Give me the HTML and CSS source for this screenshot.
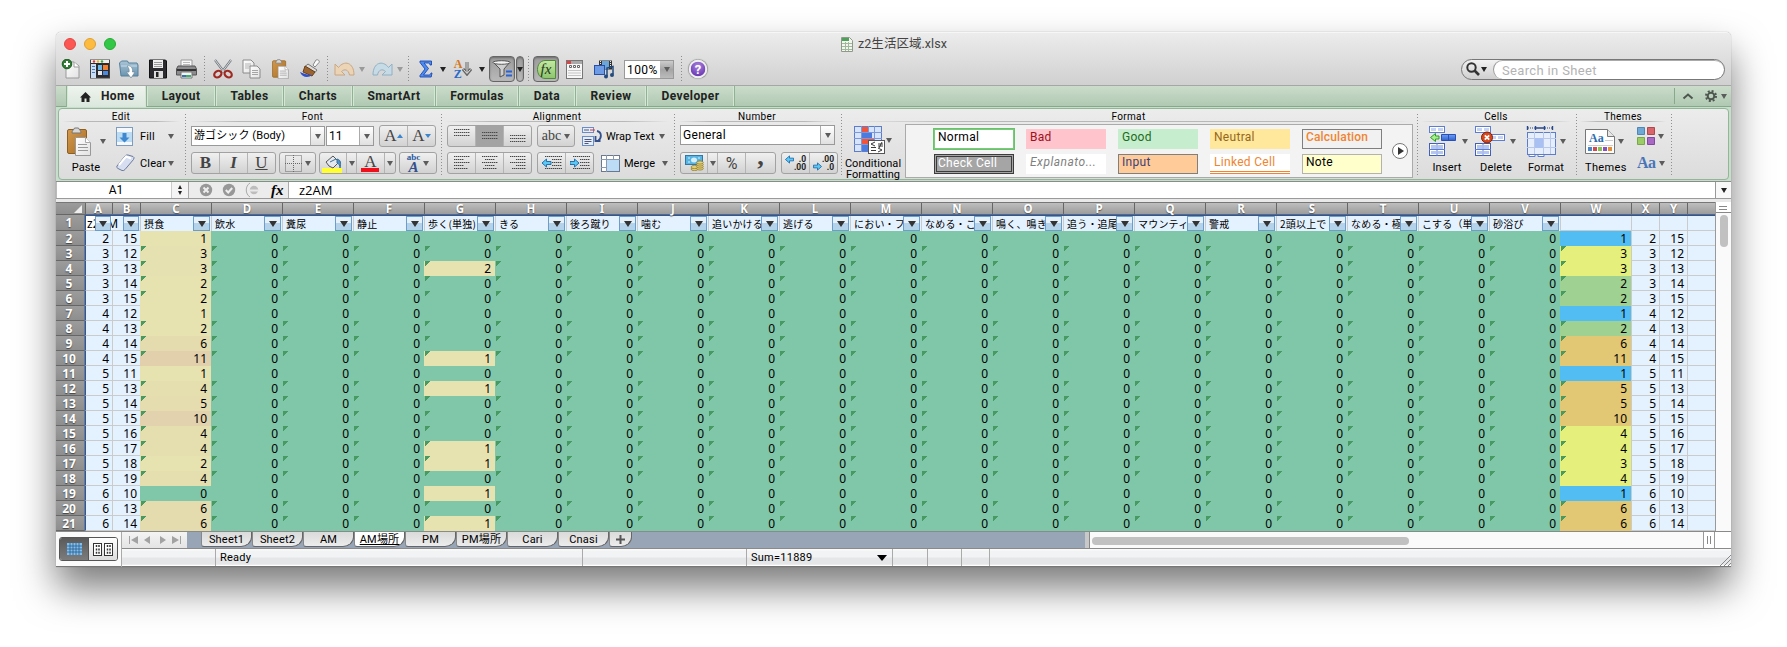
FILE: index.html
```html
<!DOCTYPE html>
<html lang="ja">
<head>
<meta charset="utf-8">
<title>z2生活区域.xlsx</title>
<link rel="stylesheet" href="styles.css">
</head>
<body>
<svg class="defs" width="0" height="0">
  <defs>
    <linearGradient id="gFolder" x1="0" y1="0" x2="0" y2="1"><stop offset="0" stop-color="#a9c4d6"/><stop offset="1" stop-color="#6b94b0"/></linearGradient>
    <linearGradient id="gWood" x1="0" y1="0" x2="1" y2="1"><stop offset="0" stop-color="#d49a4e"/><stop offset="1" stop-color="#a86d22"/></linearGradient>
    <linearGradient id="gBlue" x1="0" y1="0" x2="0" y2="1"><stop offset="0" stop-color="#6fa0f0"/><stop offset="1" stop-color="#2f62d0"/></linearGradient>
    <linearGradient id="gPage" x1="0" y1="0" x2="1" y2="1"><stop offset="0" stop-color="#fff"/><stop offset="1" stop-color="#e2e2e2"/></linearGradient>
    <linearGradient id="gGreen" x1="0" y1="0" x2="0" y2="1"><stop offset="0" stop-color="#c6e8a4"/><stop offset="1" stop-color="#8cc46a"/></linearGradient>
    <g id="pages">
      <path d="M1 1h8l3 3v10H1z" fill="url(#gPage)" stroke="#8a8a8a"/>
      <path d="M3 5h6M3 7h6M3 9h4" stroke="#b5b5b5"/>
      <path d="M8 7h7l3 3v9H8z" fill="url(#gPage)" stroke="#8a8a8a"/>
      <path d="M10 11.500h6M10 13.500h6M10 15.500h6" stroke="#a5a5a5"/>
    </g>
    <g id="clip">
      <rect x=".5" y="2.500" width="19" height="24" rx="1.500" fill="url(#gWood)" stroke="#8f5f1e"/>
      <path d="M5 6c0-3 2-3 2.500-5h4c.5 2 2.500 2 2.500 5z" fill="#d8d8d8" stroke="#777"/>
      <path d="M8.500 10.500h10l5 5v13h-15z" fill="url(#gPage)" stroke="#999"/>
      <path d="M18.500 10.500v5h5" fill="#fff" stroke="#aaa"/>
      <path d="M11 17.500h9M11 20.500h10M11 23.500h10" stroke="#999"/>
    </g>
    <g id="cell2"><rect x=".5" y=".5" width="15" height="6" fill="#fff" stroke="#5e7dd0"/><path d="M2 2h5v3H2zM9 2h5v3H9z" fill="#c5d3f6"/></g>
    <g id="cell4"><rect x=".5" y=".5" width="15" height="12" fill="#fff" stroke="#4560b0"/><path d="M2 2h5v4H2zM9 2h5v4H9zM2 8h5v3H2zM9 8h5v3H9z" fill="#b4c6f2"/><path d="M0 6.500h16M8 0v13" stroke="#5e7dd0"/></g>
    <g id="lines"><path d="M0 .5h16M0 3.500h16M0 6.500h16" stroke="#4a4a4a" stroke-dasharray="1.400 .6"/></g>
    <path id="arrL" d="M0 4l4.500-4v2.500H9v3H4.500V8z" fill="#5cc8f4" stroke="#1466a8" stroke-width=".9"/>
  </defs>
</svg>

<div class="window">
  <header class="top">
    <div class="titlebar">
      <div class="lights"><i class="red"></i><i class="amber"></i><i class="green"></i></div>
      <div class="title">
        <svg width="12" height="15" viewBox="0 0 12 15"><path d="M.5.500h8l3 3v11H.5z" fill="#f4f4f0" stroke="#8d9a88"/><path d="M1 1h7v3H1z" fill="#4fa05a"/><path d="M1 6.500h10M1 9.500h10M1 12.500h10M4.500 5v9M7.500 5v9" stroke="#9fba9a"/></svg>
        <span>z2生活区域.xlsx</span>
      </div>
    </div>
    <div class="toolbar">
      <span class="tool"><svg width="20" height="20" viewBox="0 0 20 20"><path d="M5 3h8l5 4v12H5z" fill="url(#gPage)" stroke="#999"/><path d="M13 3v5h5" fill="#fff" stroke="#999"/><circle cx="6" cy="5" r="4.800" fill="#2f7d32" stroke="#1c5a20"/><path d="M6 2v6M3 5h6" stroke="#fff" stroke-width="2"/></svg></span>
      <span class="tool"><svg width="20" height="20" viewBox="0 0 20 20"><rect x=".5" y="1" width="19" height="18" fill="#2c2c30" stroke="#444"/><path d="M1 1h18v3H1z" fill="#eee"/><circle cx="4" cy="2.500" r="1.200" fill="#d33"/><circle cx="8" cy="2.500" r="1.200" fill="#e8b020"/><circle cx="12" cy="2.500" r="1.200" fill="#3a3"/><path d="M1 5h5v14H1z" fill="#c9ddf3"/><path d="M2 7.500h3M2 10.500h3M2 13.500h3" stroke="#4a78c0"/><path d="M8 6h4v5H8z" fill="#6ab7ee"/><path d="M13 6h5v5h-5z" fill="#f08030"/><path d="M8 12h4v4H8z" fill="#e8e8e8"/><path d="M13 12h5v4h-5z" fill="#4a8be0"/></svg></span>
      <span class="tool"><svg width="20" height="20" viewBox="0 0 20 20"><path d="M.5 4l2-2h6l1 2h8.500l1 2v11H2z" fill="url(#gFolder)" stroke="#55809c"/><path d="M2 7h16" stroke="#c8dbe7"/><path d="M8 7c4-1 6 2 5.500 6H16l-4 6-4.500-6h2.500c.5-2 0-4-2-6z" fill="#fff" stroke="#6d8798" stroke-width=".7"/></svg></span>
      <span class="tool"><svg width="20" height="20" viewBox="0 0 20 20"><path d="M1.500 1h16l1 1v17h-17z" fill="#2b2b30" stroke="#111"/><path d="M5 1h10v8H5z" fill="#f0f0f0"/><path d="M6 3.500h8M6 5.500h8M6 7.500h8" stroke="#999"/><path d="M6 12h9v7H6z" fill="#ddd"/><path d="M8 13h2.500v5H8z" fill="#222"/></svg></span>
      <span class="tool"><svg width="21" height="20" viewBox="0 0 21 20"><path d="M5 1h11v8H5z" fill="#fafafa" stroke="#999"/><path d="M7 3.500h7M7 5.500h7" stroke="#bbb"/><path d="M2 7h17l1.500 3v6H.5v-6z" fill="#8d8d90" stroke="#555"/><path d="M1 10h19v2H1z" fill="#333"/><path d="M5 13h11v6H5z" fill="#f4f4f4" stroke="#777"/><path d="M6 16h4v2H6z" fill="#37a"/><path d="M10 16h5v2h-5z" fill="#3bb070"/></svg></span>
      <i class="sep s7"></i>
      <span class="tool"><svg width="20" height="20" viewBox="0 0 20 20"><path d="M2 1l9 12M18 1L9 13" stroke="#6e767c" stroke-width="2.200"/><path d="M2 1l9 12M18 1L9 13" stroke="#e2e6e8" stroke-width=".9"/><ellipse cx="4.800" cy="15" rx="3.800" ry="3" fill="none" stroke="#a02a22" stroke-width="2.200" transform="rotate(-35 5 15)"/><ellipse cx="15.200" cy="15" rx="3.800" ry="3" fill="none" stroke="#a02a22" stroke-width="2.200" transform="rotate(35 15 15)"/></svg></span>
      <span class="tool"><svg width="20" height="20" viewBox="0 0 20 20"><use href="#pages"/></svg></span>
      <span class="tool"><svg width="19" height="20" viewBox="-1 0 26 29"><use href="#clip"/></svg></span>
      <span class="tool"><svg width="20" height="20" viewBox="0 0 20 20"><path d="M13 6l3-5c2-1 4 1 3 2.500L15 8z" fill="#fafafa" stroke="#888"/><path d="M8 5l9 6-2 2.500-10-6z" fill="#ddd" stroke="#777"/><path d="M5 7l10 6-3 4-9-4z" fill="#9c6430" stroke="#6a4018"/><path d="M0 13c3 1 7 3 12 3-3 3-10 3-12-3z" fill="#2f4fc8"/></svg></span>
      <i class="sep s7"></i>
      <span class="tool t26 dim"><svg width="21" height="18" viewBox="0 0 21 18"><path d="M1 4v11h10l-3.500-3.500c3-3 7-2 8 3.500h4.500C20 2 10 0 4.500 7.500z" fill="#f1d3ae" stroke="#c69c6c"/></svg></span>
      <span class="tool t10"><i class="arr gray"></i></span>
      <span class="tool t30 dim"><svg width="21" height="18" viewBox="0 0 21 18"><path d="M20 4v11H10l3.500-3.500c-3-3-7-2-8 3.500H1C1 2 11 0 16.500 7.500z" fill="#c3dcea" stroke="#80a8c0"/></svg></span>
      <span class="tool t6"><i class="arr gray"></i></span>
      <i class="sep s11"></i>
      <span class="tool t24"><svg width="14" height="18" viewBox="0 0 14 18"><path d="M1 1h11.500v4h-1.500c0-1.500-1-2-2-2H5l4.500 5.500L4.500 15H9.500c1.500 0 2-.5 2.500-2h1l-.8 4H1v-1.500L6 9 1 2.500z" fill="#4c8bf0" stroke="#1c49b0" stroke-width=".9"/></svg></span>
      <span class="tool t10"><i class="arr dark"></i></span>
      <span class="tool t30 sortaz"><span><b class="la">A</b><b class="lz">Z</b></span><svg width="10" height="14" viewBox="0 0 10 14"><path d="M5 0v11M1 7l4 5 4-5" fill="none" stroke="#666" stroke-width="3"/><path d="M5 0v11M1.500 7.500l3.500 4 3.500-4" fill="none" stroke="#e5e5e5" stroke-width="1"/></svg></span>
      <span class="tool t8"><i class="arr dark"></i></span>
      <span class="pressed filter"><svg width="20" height="18" viewBox="0 0 20 18"><path d="M1 2h17l-6 7v6l-4 2V9z" fill="#cfcfcf" stroke="#555"/><ellipse cx="9.500" cy="2.500" rx="8.500" ry="1.800" fill="#f2f2f2" stroke="#555"/><path d="M14 11.500h6M14 15.500h6" stroke="#2a62d8" stroke-width="2"/></svg></span>
      <span class="pressed narrow"><i class="arr dark"></i></span>
      <i class="sep s9"></i>
      <span class="pressed fxb"><svg width="19" height="19" viewBox="0 0 19 19"><path d="M8 .5h10.500v18H8C-2 18-2 1 8 .5z" fill="url(#gGreen)" stroke="#4f8a3c"/></svg><em>fx</em></span>
      <span class="tool t31"><svg width="17" height="19" viewBox="0 0 17 19"><rect x=".5" y=".5" width="16" height="18" fill="#f7f7f7" stroke="#777"/><path d="M1 1h15v3H1z" fill="#aaa"/><path d="M1 1h4v3H1z" fill="#d44"/><path d="M3.500 5.500h2v2h-2zM7.500 5.500h2v2h-2zM11.500 5.500h2v2h-2z" fill="#fff" stroke="#666"/><path d="M2 10.500h13M2 13h13M2 15.500h13" stroke="#c5c5c5"/></svg></span>
      <span class="tool t28"><svg width="20" height="19" viewBox="0 0 20 19"><rect x="5" y=".5" width="13" height="9" fill="#333"/><path d="M8 1h7v8H8z" fill="#6aa6d8"/><path d="M6.500 1v8M16.500 1v8" stroke="#eee" stroke-dasharray="1 1"/><rect x=".5" y="5.500" width="10" height="9" fill="#6d9be6" stroke="#2850a8"/><path d="M13 16V8l6-1.500V14" fill="none" stroke="#234a7c" stroke-width="1.500"/><circle cx="12" cy="16.500" r="2" fill="#234a7c"/><circle cx="18" cy="15" r="2" fill="#234a7c"/></svg></span>
      <span class="zoom"><span>100%</span><i><i class="arr"></i></i></span>
      <i class="sep s14"></i>
      <span class="help">?</span>
      <div class="search"><span class="lens"><svg width="14" height="14" viewBox="0 0 14 14"><circle cx="5.500" cy="5.500" r="4.200" fill="none" stroke="#333" stroke-width="2"/><path d="M8.500 8.500l4.500 4.500" stroke="#333" stroke-width="2.600"/></svg><i class="arr dark"></i></span><span class="field">Search in Sheet</span></div>
    </div>
  </header>

  <nav class="tabs">
    <span class="tab home"><svg width="11" height="10" viewBox="0 0 11 10"><path d="M5.500 0L11 5.500H9.500V10H6.500V6.500h-2V10h-3V5.500H0z" fill="#222"/></svg>Home</span>
    <span class="tab w69">Layout</span><span class="tab w68">Tables</span><span class="tab w69">Charts</span><span class="tab w83">SmartArt</span><span class="tab w83">Formulas</span><span class="tab w57">Data</span><span class="tab w71">Review</span><span class="tab w88">Developer</span>
    <span class="tabtools"><svg width="12" height="8" viewBox="0 0 12 8"><path d="M1.500 6.500L6 2.500l4.500 4" fill="none" stroke="#4d574e" stroke-width="2"/></svg><svg class="gear" width="12" height="12" viewBox="0 0 12 12"><circle cx="6" cy="6" r="3.300" fill="none" stroke="#4d574e" stroke-width="2"/><circle cx="6" cy="6" r="5" fill="none" stroke="#4d574e" stroke-width="2" stroke-dasharray="2 1.930"/></svg><i class="arr"></i></span>
  </nav>

  <section class="ribbonwrap"><div class="ribbon">
    <div class="group g-edit"><h6>Edit</h6>
      <div class="body">
        <div class="big paste"><span class="pic"><svg width="25" height="30" viewBox="0 0 25 30"><use href="#clip"/></svg><i class="arr"></i></span><label>Paste</label></div>
        <div class="rows">
          <div class="row"><span class="ic"><svg width="17" height="19" viewBox="0 0 17 19"><rect x=".5" y=".5" width="16" height="18" fill="#f5f9fd" stroke="#7d9cc0"/><path d="M1 5h15v10H1z" fill="#bcdcf4"/><path d="M6.500 6h4v4.500h3l-5 5-5-5h3z" fill="#3f88d0"/></svg></span><label>Fill</label><i class="arr"></i></div>
          <div class="row"><span class="ic"><svg width="19" height="18" viewBox="0 0 19 18"><path d="M1 12L9 2q1.500-1.500 3-1l5 1.500q2 1 .5 3L9 15.500q-1 1.500-3 1l-4-2q-2-1-1-2.500z" fill="#d6def0" stroke="#6c7a9c"/><path d="M3 11l7-8.500 5 2" fill="none" stroke="#fff" stroke-width="2"/></svg></span><label>Clear</label><i class="arr"></i></div>
        </div>
      </div>
    </div>

    <div class="group g-font"><h6>Font</h6>
      <div class="rows">
        <div class="row">
          <span class="combo fontname"><span>游ゴシック (Body)</span><i><i class="arr"></i></i></span>
          <span class="combo size"><span>11</span><i><i class="arr"></i></i></span>
          <span class="seg ml5"><b class="s28 serif">A<i class="tri up"></i></b><b class="s28 serif">A<i class="tri dn"></i></b></span>
        </div>
        <div class="row">
          <span class="seg"><b class="s28 serif bold">B</b><b class="s28 serif ital">I</b><b class="s28 serif und">U</b></span>
          <span class="seg ml3"><b class="s37"><svg width="17" height="17" viewBox="0 0 17 17"><path d="M.5.500h16v16H.5zM8.500 0v17M0 8.500h17" fill="none" stroke="#666" stroke-dasharray="1 1"/></svg><i class="arr"></i></b></span>
          <span class="seg ml3"><b class="s27 barred yel"><svg width="17" height="14" viewBox="0 0 17 14"><path d="M1 7l7-6 6 6-6 6-4-2z" fill="#e5e8ec" stroke="#555"/><path d="M5 7l6-3M12 4c4 1 4 4 3 9 0-3-1-4-3-5z" fill="#4a90c8" stroke="#3a6f98"/></svg></b><b class="s10"><i class="arr"></i></b><b class="s28 serif barred redbar">A</b><b class="s10"><i class="arr"></i></b></span>
          <span class="seg ml3"><b class="s38 abc"><span><small>abc</small><em>A</em></span><i class="arr"></i></b></span>
        </div>
      </div>
    </div>

    <div class="group g-align"><h6>Alignment</h6>
      <div class="rows">
        <div class="row">
          <span class="seg"><b class="s28 atop"><svg width="16" height="8"><use href="#lines"/></svg></b><b class="s28 on"><svg width="16" height="8"><use href="#lines"/></svg></b><b class="s28 abot"><svg width="16" height="8"><use href="#lines"/></svg></b></span>
          <span class="seg ml5"><b class="s38 serif abct">abc<i class="arr"></i></b></span>
          <span class="ic wrapic"><svg width="21" height="19" viewBox="0 0 21 19"><rect x=".5" y=".5" width="11" height="5" fill="#e4edfa" stroke="#6d8cc4"/><path d="M2 3h5" stroke="#557"/><path d="M8 3h5" stroke="#d33"/><rect x=".5" y="9.500" width="11" height="9" fill="#e4edfa" stroke="#6d8cc4"/><path d="M2.500 12.500h7M2.500 14.500h7M2.500 16.500h4" stroke="#557"/><path d="M15 4c5 1 5 7 1 10M18.500 14h-5V9" fill="none" stroke="#34508c" stroke-width="1.800"/></svg></span>
          <label class="wl">Wrap Text</label><i class="arr"></i>
        </div>
        <div class="row">
          <span class="seg"><b class="s28"><svg width="16" height="14" viewBox="0 0 16 14"><path d="M0 .5h16M0 3.500h10M0 6.500h16M0 9.500h10M0 12.500h14" stroke="#444" stroke-dasharray="1.400 .6"/></svg></b><b class="s28"><svg width="16" height="14" viewBox="0 0 16 14"><path d="M0 .5h16M3 3.500h10M0 6.500h16M3 9.500h10M1 12.500h14" stroke="#444" stroke-dasharray="1.400 .6"/></svg></b><b class="s28"><svg width="16" height="14" viewBox="0 0 16 14"><path d="M0 .5h16M6 3.500h10M0 6.500h16M6 9.500h10M2 12.500h14" stroke="#444" stroke-dasharray="1.400 .6"/></svg></b></span>
          <span class="seg ml5"><b class="s28"><svg width="20" height="14" viewBox="0 0 20 14"><path d="M3 .5h17M10 3.500h10M10 6.500h10M10 9.500h10M3 12.500h17" stroke="#444" stroke-dasharray="1.400 .6"/><use href="#arrL" y="3"/></svg></b><b class="s28"><svg width="20" height="14" viewBox="0 0 20 14"><path d="M3 .5h17M10 3.500h10M10 6.500h10M10 9.500h10M3 12.500h17" stroke="#444" stroke-dasharray="1.400 .6"/><use href="#arrL" transform="matrix(-1 0 0 1 9 3)"/></svg></b></span>
          <span class="ic mergeic"><svg width="19" height="17" viewBox="0 0 19 17"><rect x=".5" y=".5" width="18" height="16" fill="#fff" stroke="#6a7890"/><path d="M0 4.500h19M5.500 0v17M12.500 0v4M0 12.500h5" stroke="#8a98b0"/><path d="M6 5h12v11H6z" fill="#bcdcf6"/></svg></span>
          <label class="ml">Merge</label><i class="arr"></i>
        </div>
      </div>
    </div>

    <div class="group g-num"><h6>Number</h6>
      <div class="rows">
        <div class="row"><span class="combo numfmt"><span>General</span><i><i class="arr"></i></i></span></div>
        <div class="row">
          <span class="seg open"><b class="s27"><svg width="19" height="16" viewBox="0 0 19 16"><rect x=".5" y=".5" width="17" height="9" fill="#58b4e0" stroke="#2f78a8"/><ellipse cx="9" cy="5" rx="3" ry="2.500" fill="#d5eefa"/><path d="M3 3h2M3 7h2M13 3h2" stroke="#d5eefa"/><g fill="#e5cf78" stroke="#8a7424" stroke-width=".7"><ellipse cx="9.500" cy="14" rx="3.500" ry="1.600"/><ellipse cx="9.500" cy="12" rx="3.500" ry="1.600"/><ellipse cx="15" cy="13.500" rx="3.300" ry="1.600"/><ellipse cx="15" cy="11.500" rx="3.300" ry="1.600"/><ellipse cx="15" cy="9.500" rx="3.300" ry="1.600"/><ellipse cx="15" cy="7.500" rx="3.300" ry="1.600"/></g></svg></b><b class="s10"><i class="arr"></i></b><b class="s28 pct">%</b><b class="s29 comma serif">,</b></span>
          <span class="seg ml5"><b class="s28 dec"><svg width="9" height="9" viewBox="-.5 -.5 10 9"><use href="#arrL"/></svg><span>.0<br>.00</span></b><b class="s28 dec r"><svg width="9" height="9" viewBox="-.5 -.5 10 9"><use href="#arrL" transform="matrix(-1 0 0 1 9 0)"/></svg><span>.00<br>.0</span></b></span>
        </div>
      </div>
    </div>

    <div class="group g-format"><h6>Format</h6>
      <div class="body">
        <div class="big cond"><span class="pic"><svg width="31" height="28" viewBox="0 0 31 28"><rect x=".5" y=".5" width="27" height="25" fill="#fff" stroke="#5e7dc8"/><path d="M1 1h26v24H1z" fill="#d8e4fa"/><path d="M8 1h6v6H8zM8 13h12v6H8z" fill="#f0553c"/><path d="M8 7h10v6H8zM8 19h6v6H8z" fill="#4c7be0"/><path d="M0 6.500h28M0 12.500h28M0 18.500h28M7.500 0v26M14.500 0v6M20.500 0v26" stroke="#7c98d8"/><rect x="14.500" y="14.500" width="16" height="13" fill="#fff" stroke="#555"/><path d="M21 16l-4 2 4 2M17 21.500h5M17 24.500h5M24 18h5M24 20h5M28 16l-3 6M24 22l4 2-4 2" fill="none" stroke="#222" stroke-width=".9"/></svg><i class="arr"></i></span><label>Conditional<br>Formatting</label></div>
        <div class="gallery">
          <div class="styles">
            <span class="st normal">Normal</span><span class="st bad">Bad</span><span class="st good">Good</span><span class="st neutral">Neutral</span><span class="st calc">Calculation</span>
            <span class="st check">Check Cell</span><span class="st expl">Explanato...</span><span class="st input">Input</span><span class="st linked">Linked Cell</span><span class="st note">Note</span>
          </div>
          <span class="more"><svg width="6" height="8" viewBox="0 0 6 8"><path d="M0 0l6 4-6 4z" fill="#333"/></svg></span>
        </div>
      </div>
    </div>

    <div class="group g-cells"><h6>Cells</h6>
      <div class="body">
        <div class="big b-ins"><span class="pic"><svg width="28" height="31" viewBox="0 0 28 31"><use href="#cell2"/><use href="#cell4" y="17"/><path d="M12.500 8.500h14v6h-14z" fill="url(#gBlue)" stroke="#2a50b8"/><path d="M19.500 9v6" stroke="#2a50b8"/><path d="M1.500 11.500L6.500 7.500v2.500H10v3H6.500v2.500z" fill="#a6f08a" stroke="#2e9a2e"/></svg><i class="arr"></i></span><label>Insert</label></div>
        <div class="big b-del"><span class="pic"><svg width="30" height="31" viewBox="0 0 30 31"><use href="#cell2"/><use href="#cell4" y="17"/><use href="#cell2" x="14" y="8"/><circle cx="12" cy="11.500" r="5.500" fill="#d8481c" stroke="#7c2408"/><path d="M9.800 9.300l4.400 4.400M14.200 9.300l-4.400 4.400" stroke="#fff" stroke-width="1.800"/></svg><i class="arr"></i></span><label>Delete</label></div>
        <div class="big b-fmt"><span class="pic"><svg width="31" height="31" viewBox="0 0 31 31"><rect x="1.500" y="6.500" width="28" height="22" fill="#e6eefc" stroke="#5e7dc8"/><path d="M1 12.500h29M1 21.500h29M8.500 6v22M17.500 6v22M24.500 6v22" stroke="#b8c8ea"/><path d="M9 12h8v10H9z" fill="#a9c0f2"/><path d="M3 28.500h6v2H3zM12 28.500h6v2h-6z" fill="#fff" stroke="#5e7dc8"/><path d="M1.500 0v4M9.500 0v4M18.500 0v4M26.500 0v4M9 2h10" stroke="#26468c" stroke-width="1.400"/><path d="M2 2h7M19 2h7" stroke="#26468c" stroke-dasharray="1 1"/></svg><i class="arr"></i></span><label>Format</label></div>
      </div>
    </div>

    <div class="group g-themes"><h6>Themes</h6>
      <div class="body">
        <div class="big b-thm"><span class="pic"><span class="doc"><svg width="31" height="27" viewBox="0 0 31 27"><path d="M.5 1.500h22l7 7v17H.5z" fill="#fdfdfd" stroke="#777"/><path d="M22.500 1.500v7h7" fill="#e6e6e6" stroke="#777"/><path d="M20 12.500h8M3 17.500h25" stroke="#ccc"/><path d="M3 19h4v4H3z" fill="#4a86c8"/><path d="M8 19h4v4H8z" fill="#d04a50"/><path d="M13 19h4v4h-4z" fill="#86c050"/><path d="M18 19h4v4h-4z" fill="#8a50b8"/><path d="M23 19h4v4h-4z" fill="#e88a30"/></svg><em>Aa</em></span><i class="arr"></i></span><label>Themes</label></div>
        <div class="rows">
          <div class="row"><svg width="18" height="18" viewBox="0 0 18 18"><path d="M.5.500h7v7h-7z" fill="#6fa8d4" stroke="#4e86b4"/><path d="M10.500.500h7v7h-7z" fill="#d8646c" stroke="#b0464e"/><path d="M.5 10.500h7v7h-7z" fill="#9ccc66" stroke="#7aa848"/><path d="M10.500 10.500h7v7h-7z" fill="#a868c4" stroke="#8448a0"/></svg><i class="arr"></i></div>
          <div class="row"><span class="aa">Aa</span><i class="arr"></i></div>
        </div>
      </div>
    </div>
  </div></section>

  <section class="fbar">
    <span class="namebox">A1</span>
    <span class="stepper"><i class="tri2 up"></i><i class="tri2 dn"></i></span>
    <span class="fbtns">
      <svg width="14" height="14" viewBox="0 0 14 14"><circle cx="7" cy="7" r="6.200" fill="#989898"/><path d="M4.500 4.500l5 5M9.500 4.500l-5 5" stroke="#eee" stroke-width="2"/></svg>
      <svg width="14" height="14" viewBox="0 0 14 14"><circle cx="7" cy="7" r="6.200" fill="#989898"/><path d="M3.800 7l2.400 2.500 4-4.500" fill="none" stroke="#eee" stroke-width="2"/></svg>
      <svg width="14" height="16" viewBox="0 0 14 16"><path d="M5 1C0 4 0 12 5 15" fill="none" stroke="#aaa"/><circle cx="9" cy="8" r="4.200" fill="#bdbdbd"/><path d="M5 8.500h8" stroke="#e8e8e8" stroke-width="2"/></svg>
      <em>fx</em>
    </span>
    <span class="finput">z2AM</span>
    <span class="fdrop"><i class="arr dark"></i></span>
  </section>

  <section class="sheetarea">
    <div class="sheet" id="sheet"></div>
    <div class="vscroll"><span class="split"></span><span class="thumb"></span></div>
  </section>

  <footer class="bottom">
    <div class="views"><span class="vseg"><i class="v1"><svg width="15" height="12" viewBox="0 0 15 12"><rect width="15" height="12" fill="#7fc0f4"/><path d="M0 3h15M0 6h15M0 9h15M3 0v12M6 0v12M9 0v12M12 0v12" stroke="#2d5a84" stroke-width=".8"/></svg></i><i class="v2"><svg width="20" height="13" viewBox="0 0 20 13"><g fill="#fff" stroke="#333"><rect x=".5" y=".5" width="8" height="12"/><rect x="11.500" y=".5" width="8" height="12"/></g><path d="M3.500 2v9M6 2v9M14.500 2v9M17 2v9" stroke="#333" stroke-width="1.500" stroke-dasharray="2 1.400"/></svg></i></span></div>
    <div class="right">
      <div class="sheetbar">
        <span class="nav"><svg width="54" height="8" viewBox="0 0 54 8"><g fill="#a2a2a2"><path d="M1 0h1v8H1zM10 0v8L3 4zM22 0v8l-6-4zM32 0v8l6-4zM44 0v8l7-4zM52 0h1v8h-1z"/></g></svg></span>
        <span class="stabs"><span class="stab">Sheet1</span><span class="stab">Sheet2</span><span class="stab">AM</span><span class="stab cur"><u>AM場所</u></span><span class="stab">PM</span><span class="stab">PM場所</span><span class="stab">Cari</span><span class="stab">Cnasi</span><span class="stab plus"><svg width="9" height="9"><path d="M4.500 0v9M0 4.500h9" stroke="#555" stroke-width="2"/></svg></span></span>
        <span class="splitbar"></span>
        <span class="hscroll"><i></i></span>
        <span class="hgrip"></span>
        <span class="hcorner"></span>
      </div>
      <div class="status">
        <span class="p1"></span><span class="p2">Ready</span><span class="p3"></span><span class="p4">Sum=11889<i class="arr black"></i></span><span class="p5"></span><span class="p6"></span><span class="p7"></span><span class="p8"><svg width="12" height="12" viewBox="0 0 12 12"><path d="M1 12L12 1M5 12l7-7M9 12l3-3" stroke="#888"/></svg></span>
      </div>
    </div>
  </footer>
</div>
<script src="grid.js"></script>
</body>
</html>
```

FILE: styles.css
```css
* { box-sizing: border-box; }
body { margin: 0; width: 1787px; height: 647px; overflow: hidden; background: #fff; font: 11px/13px Roboto, "Noto Sans CJK JP", sans-serif; color: #000; padding: 32px 56px 0; }
svg { display: block; flex: none; }
.defs { position: absolute; }
.window { width: 1675px; height: 535px; border-radius: 5px 5px 0 0; box-shadow: 0 0 1px rgba(0,0,0,.45), 0 21px 38px rgba(0,0,0,.52); display: flex; flex-direction: column; background: #d9d9d9; }
.window > * { flex: none; }

.arr { width: 0; height: 0; flex: none; border: 3px solid transparent; border-top: 5px solid #5c5c5c; border-bottom: 0; display: block; }
.arr.dark { border-top-color: #222; }
.arr.gray { border-top-color: #9a9a9a; }
.arr.black { border: 5px solid transparent; border-top: 6px solid #000; border-bottom: 0; }

.top { height: 54px; border-radius: 5px 5px 0 0; background: linear-gradient(#ececec, #d0d0d0); border-top: 1px solid #f6f6f6; border-bottom: 1px solid #a6a6a6; display: flex; flex-direction: column; }
.titlebar { height: 22px; display: flex; align-items: center; }
.lights { display: flex; gap: 8px; padding-left: 8px; width: 200px; }
.lights i { width: 12px; height: 12px; border-radius: 50%; }
.red { background: #fc5753; border: 1px solid #df4744; }
.amber { background: #fdbc40; border: 1px solid #de9f34; }
.green { background: #33c748; border: 1px solid #27aa35; }
.title { display: flex; align-items: center; gap: 5px; margin-left: 585px; font-size: 12.500px; line-height: 22px; letter-spacing: .05px; color: #444; }
.toolbar { height: 28px; display: flex; align-items: center; }
.tool { width: 29px; display: flex; align-items: center; justify-content: center; }
.t26 { width: 26px; } .t10 { width: 10px; } .t30 { width: 30px; } .t6 { width: 6px; } .t24 { width: 24px; } .t8 { width: 8px; } .t31 { width: 31px; } .t28 { width: 28px; }
.dim { opacity: .8; }
.sep { height: 26px; width: 7px; background: repeating-linear-gradient(#8d8d8d 0 1px, transparent 1px 3px) center/1px 100% no-repeat; }
.s11 { width: 11px; } .s9 { width: 9px; } .s14 { width: 14px; }
.sortaz span { display: flex; flex-direction: column; gap: 0; font: bold 12px/10px "Liberation Serif", serif; }
.sortaz b { height: 10px; }
.la { color: #d07820; } .lz { color: #2a6ac8; }
.pressed { height: 26px; border: 1px solid #666; border-radius: 4px; background: linear-gradient(#9b9b9b, #b9b9b9); display: flex; align-items: center; justify-content: center; box-shadow: inset 0 1px 2px rgba(0,0,0,.3); }
.filter { width: 26px; margin-left: 3px; }
.narrow { width: 8px; margin-left: 1px; }
.fxb { width: 26px; display: grid; }
.fxb > * { grid-area: 1 / 1; justify-self: center; }
.fxb em { font: italic 15px/17px "Liberation Serif", serif; color: #233a1c; z-index: 1; }
.zoom { width: 50px; height: 19px; margin-left: 6px; border: 1px solid #999; background: #fff; display: flex; font-size: 12px; line-height: 18px; letter-spacing: .4px; }
.zoom span { width: 35px; padding-left: 2px; }
.zoom > i { flex: 1; background: linear-gradient(#ccc, #a5a5a5 50%, #bbb); display: flex; align-items: center; justify-content: center; }
.help { width: 20px; height: 20px; border-radius: 50%; border: 2px solid #efefef; background: radial-gradient(circle at 50% 30%, #a983dd, #5a24a8); box-shadow: 0 0 1px 1px #999; color: #fff; font: bold 14px/16px Roboto, sans-serif; text-align: center; transform: scale(.92); }
.search { margin-left: auto; margin-right: 6px; width: 264px; height: 21px; border: 1px solid #777; border-radius: 11px; background: linear-gradient(#f2f2f2, #cfcfcf); display: flex; overflow: hidden; }
.lens { width: 31px; display: flex; align-items: center; gap: 1px; padding-left: 4px; }
.field { flex: 1; background: #fff; border-radius: 11px; border-left: 1px solid #999; border-top: 1px solid #aaa; font-size: 13px; line-height: 20px; letter-spacing: .35px; color: #b3b3b3; padding-left: 8px; }

.tabs { height: 21px; background: linear-gradient(#cbdccb, #b0c9b2); border-bottom: 1px solid #86a98a; display: flex; padding-left: 10px; }
.tab { border-right: 1px solid #8fb294; box-shadow: inset -1px 0 #d5e6d5, inset 1px 0 #d5e6d5; text-align: center; font: bold 12px/21px Roboto, sans-serif; letter-spacing: .4px; color: #222; }
.home { width: 81px; margin-bottom: -1px; background: linear-gradient(#eef4ee, #dbe7dc); border-left: 1px solid #8fb294; display: flex; align-items: center; gap: 10px; padding-left: 13px; }
.w69 { width: 69px; } .w68 { width: 68px; } .w83 { width: 83px; } .w57 { width: 57px; } .w71 { width: 71px; } .w88 { width: 88px; }
.tabtools { margin-left: auto; width: 57px; border-left: 1px solid #86a98a; margin-top: 2px; height: 16px; display: flex; align-items: center; padding-left: 7px; }
.gear { margin-left: 11px; } .tabtools .arr { margin-left: 4px; }

.ribbonwrap { height: 75px; background: #c5dfca; padding: 1px 2px 1px; border-bottom: 1px solid #8b8b8b; }
.ribbon { height: 72px; border: 1px solid #93b598; border-radius: 4px; background: linear-gradient(#ececec, #dcdcdc); display: flex; }
.group { height: 70px; background: repeating-linear-gradient(#909090 0 1px, transparent 1px 3px) right 5px / 1px 62px no-repeat; display: flex; flex-direction: column; }
.group h6 { margin: 0 6px 0 3px; height: 13px; font: 10px/15px Roboto, sans-serif; letter-spacing: .35px; text-align: center; background: linear-gradient(90deg, transparent, #b8b8b8 20% 80%, transparent) bottom/100% 1px no-repeat; flex: none; }
.g-edit { width: 127px; } .g-font { width: 256px; } .g-align { width: 233px; } .g-num { width: 167px; } .g-format { width: 576px; } .g-cells { width: 159px; } .g-themes { width: 95px; }
.body { display: flex; }
.rows { display: flex; flex-direction: column; gap: 5px; padding: 3px 0 0 5px; }
.row { height: 22px; display: flex; align-items: center; }
label { font-size: 11px; letter-spacing: .15px; white-space: nowrap; }
.ml5 { margin-left: 5px; } .ml3 { margin-left: 3px; }
.big { display: flex; flex-direction: column; }
.big .pic { height: 39px; display: flex; align-items: center; flex: none; }
.big label { text-align: center; line-height: 14px; }
.paste { width: 57px; padding-left: 8px; }
.paste .arr { margin-left: 8px; } .paste label { width: 38px; }
.g-edit .rows { padding-left: 0; }
.g-edit .ic { width: 24px; } .g-edit .row label { width: 28px; }

.combo { display: flex; height: 20px; border: 1px solid #999; background: #fff; font-size: 12px; line-height: 18px; }
.combo span { flex: 1; padding-left: 2px; }
.combo > i { width: 14px; border-left: 1px solid #aaa; background: linear-gradient(#fff, #e0e0e0); display: flex; align-items: center; justify-content: center; }
.fontname { width: 134px; font-size: 11px; letter-spacing: .1px; white-space: nowrap; }
.size { width: 48px; margin-left: 1px; }
.numfmt { width: 155px; letter-spacing: .3px; margin-bottom: 2px; }

.seg { display: flex; height: 22px; border: 1px solid #a2a2a2; border-radius: 3px; background: linear-gradient(#f0f0f0, #d2d2d2); overflow: hidden; }
.seg.open { overflow: visible; }
.seg b { font-weight: normal; display: flex; align-items: center; justify-content: center; border-right: 1px solid #b4b4b4; color: #444; }
.seg b:last-child { border-right: 0; }
.s28 { width: 28px; } .s27 { width: 27px; } .s29 { width: 29px; } .s10 { width: 10px; } .s37 { width: 37px; gap: 3px; } .s38 { width: 38px; gap: 3px; }
.seg b:first-child:last-child { border: 0; margin: 0 -1px; }
.seg .s28:last-child { width: 27px; }
.serif { font-family: "Liberation Serif", serif; font-size: 17px; line-height: 20px; }
.seg .bold { font-weight: bold; } .seg .ital { font-style: italic; font-weight: bold; } .und { text-decoration: underline; }
.tri { width: 0; height: 0; border: 3px solid transparent; }
.tri.up { border-bottom: 4px solid #3a86d0; border-top: 0; } .tri.dn { border-top: 4px solid #3a86d0; border-bottom: 0; }
.barred.s27, .barred.s28 { padding-bottom: 3px; }
.yel { background: linear-gradient(#ff3 0 0) 2px 15px/20px 5px no-repeat; } .redbar { background: linear-gradient(#f0101c 0 0) 4px 15px/18px 4px no-repeat; }
.abc span { display: flex; flex-direction: column; align-items: center; color: #2c5aa0; }
.abc small { font: bold 9px/7px "Liberation Serif", serif; } .abc em { font: italic bold 15px/12px "Liberation Serif", serif; color: #34508c; }
.abct { font-size: 14px; }
.on { background: #a3a3a3; }
.atop { padding-bottom: 6px; } .abot { padding-top: 5px; }
.wrapic { margin-left: 7px; width: 24px; } .wl { width: 53px; letter-spacing: -.05px; }
.mergeic { margin-left: 7px; width: 23px; } .ml { width: 38px; letter-spacing: 0; }
.pct { font-size: 16px; } .seg .comma { font-size: 26px; font-weight: bold; padding-bottom: 12px; }
.dec { align-items: flex-start !important; padding-top: 2px; }
.dec span { font: bold 8.500px/8px Roboto, sans-serif; color: #222; text-align: right; }
.dec.r svg { margin-top: 7px; }

.cond { width: 63px; padding-left: 2px; }
.cond .pic { padding-left: 10px; height: 36px; } .cond .arr { margin-left: 1px; }
.cond label { line-height: 11px; width: 58px; letter-spacing: .05px; }
.gallery { width: 508px; height: 54px; margin-top: 2px; border: 1px solid #aaa; background: #f3f3f3; display: flex; align-items: center; padding-left: 28px; }
.styles { display: grid; grid-template-columns: repeat(5, 80px); grid-auto-rows: 20px; gap: 5px 12px; }
.st { font-size: 12px; line-height: 16px; letter-spacing: .3px; padding-left: 4px; background: #fff; }
.normal { border: 1px solid #7c7; outline: 1px solid #6cbf6c; padding-left: 3px; line-height: 15px; }
.bad { background: #ffc4cc; color: #a0101c; } .good { background: #c6edcd; color: #1c6b20; } .neutral { background: #ffe79c; color: #96661a; }
.calc { border: 1px solid #7f7f7f; background: #f1f1f1; color: #f08430; padding-left: 3px; font-weight: 500; letter-spacing: .15px; line-height: 15px; }
.check { border: 3px double #3c3c3c; background: #a5a5a5; color: #fff; line-height: 12px; padding-left: 1px; }
.expl { font-style: italic; color: #7f7f7f; letter-spacing: .5px; } .input { background: #ffcb99; border: 1px solid #7f7f7f; color: #3f3f76; padding-left: 3px; line-height: 15px; }
.linked { border-bottom: 3px double #f08430; color: #f08430; } .note { background: #ffffcc; border: 1px solid #b2b2b2; padding-left: 3px; line-height: 15px; }
.more { width: 16px; height: 16px; border: 1px solid #777; border-radius: 50%; background: #fff; margin-left: 10px; display: flex; align-items: center; justify-content: center; padding-left: 1px; }

.g-cells .arr, .g-themes .big .arr { margin-left: 5px; }
.b-ins { width: 50px; padding-left: 11px; } .b-ins label { width: 36px; }
.b-del { width: 50px; padding-left: 7px; } .b-del label { width: 42px; }
.b-fmt { width: 50px; padding-left: 8px; } .b-fmt label { width: 40px; }
.b-fmt .arr { margin-left: 3px !important; }
.b-thm { width: 55px; padding-left: 8px; } .b-thm label { width: 41px; letter-spacing: .35px; } .b-thm .arr { margin-left: 2px !important; }
.doc { display: grid; } .doc > * { grid-area: 1 / 1; } .doc em { font: bold 12px/14px "Liberation Serif", serif; color: #2e6cae; padding: 3px 0 0 4px; }
.g-themes .rows .arr { margin-left: 3px; }
.aa { font: bold 16px/20px "Liberation Serif", serif; color: #4a74b8; width: 19px; letter-spacing: -.5px; }

.fbar { height: 17px; display: flex; background: #f2f2f2; border-bottom: 1px solid #9a9a9a; }
.namebox { width: 115px; background: #fff; text-align: center; font: 12px/17px Roboto, sans-serif; border-left: 1px solid #bbb; padding-left: 4px; }
.stepper { width: 18px; border-left: 1px solid #ccc; border-right: 1px solid #aaa; display: flex; flex-direction: column; align-items: center; justify-content: center; gap: 2px; background: #f4f4f4; }
.tri2 { border: 2.500px solid transparent; } .tri2.up { border-bottom: 4px solid #222; border-top: 0; } .tri2.dn { border-top: 4px solid #222; border-bottom: 0; }
.fbtns { width: 100px; padding-left: 10px; display: flex; align-items: center; gap: 9px; background: #ececec; border-right: 1px solid #aaa; }
.fbtns em { font: italic bold 15px/16px "Liberation Serif", serif; margin-left: 3px; }
.finput { flex: 1; background: #fff; padding-left: 10px; font: 13px/16px "Open Sans", sans-serif; }
.fdrop { width: 16px; border-left: 1px solid #999; background: #f8f8f8; display: flex; align-items: center; justify-content: center; }

.sheetarea { height: 333px; padding-top: 3px; display: flex; background: #e9e9e9; border-bottom: 1px solid #8a8a8a; }
.sheet { width: 1659px; height: 329px; overflow: hidden; background: #e4f2ff; }
.line { display: flex; height: 15px; font: 12px/15px "Noto Sans", "Noto Sans CJK JP", sans-serif; }
.line.heads { height: 13px; background: linear-gradient(#bebebe, #9c9c9c); border-top: 1px solid #777; border-bottom: 1px solid #666; font: bold 11.500px/12px "Noto Sans", sans-serif; color: #fff; text-shadow: 0 1px 1px #555; }
.heads .c { text-align: center; border-left: 1px solid #666; padding: 0; }
.heads .c:first-child { border: 0; }
.corner { background: linear-gradient(#7c7c7c, #8c8c8c); display: flex; justify-content: flex-end; align-items: center; }
.corner i { border: 4px solid #eee; border-left-color: transparent; border-top-color: transparent; margin-right: 3px; }
.line.first { height: 16px; border-top: 1px solid #2058b4; }
.c { flex: none; width: 71px; text-align: right; padding-right: 3px; position: relative; border-left: 1px solid #cbcbcb; border-bottom: 1px solid #cbcbcb; white-space: nowrap; }
.heads .c { border-bottom: 0; }
.n { width: 29px; background: linear-gradient(#9c9c9c, #8e8e8e); color: #fff; font-weight: bold; text-align: center; padding: 0 2px 0 0; border: 0; border-bottom: 1px solid #666; border-right: 1px solid #777; text-shadow: 0 1px 1px #444; }
.first .n { margin-top: -1px; }
.a { width: 27px; border-left-color: #2058b4; } .b { width: 28px; }
.z { width: 28px; }
.heads .a { border-left-color: #666; padding-right: 2px; }
.f { border: 0; background: #80c7aa; padding-right: 4px; }
.err::before { content: ""; position: absolute; left: 1px; top: 0; width: 5px; height: 5px; background: linear-gradient(135deg, #479a62 55%, transparent 56%); }
.first .c:not(.n) { text-align: left; padding-left: 3px; }
.first .h { font: 10px/15px "Noto Sans CJK JP", sans-serif; letter-spacing: .2px; padding-right: 0; display: flex; justify-content: space-between; border-bottom: 0; }
.first .h span { flex: 1; width: 0; overflow: hidden; }
.btn { width: 17px; height: 15px; flex: none; border: 1px solid #6a9ccc; background: linear-gradient(#e6f0f8 45%, #b4d2ea 50%); display: flex; align-items: center; justify-content: center; z-index: 1; margin-right: 1px; }
.btn .arr { border-width: 4px; border-top: 6px solid #333; border-bottom: 0; }
.first .a1 { background: #fff; display: flex; justify-content: space-between; }
.first .a1, .first .c.a1, .first .c.b1 { padding: 0; }
.first .a1 span { width: 9px; padding-left: 1px; overflow: visible; }
.first .a1 .btn, .b1 .btn { width: 16px; }
.first .b1 { display: flex; justify-content: flex-end; border-left: 0; }
.vscroll { width: 16px; border-left: 1px solid #999; background: #fafafa; display: flex; flex-direction: column; align-items: center; }
.split { width: 100%; height: 11px; background: linear-gradient(#888 0 0) 3px 4px/8px 1px no-repeat, linear-gradient(#888 0 0) 3px 7px/8px 1px no-repeat, #fff; border-bottom: 1px solid #888; }
.thumb { width: 8px; height: 32px; border-radius: 4px; background: #c1c1c1; margin-top: 2px; margin-left: 1px; }

.bottom { height: 35px; display: flex; background: #f4f4f4; }
.views { width: 65px; padding: 5px 0 0 3px; background: #fafafa; border-bottom: 1px solid #777; }
.vseg { display: flex; width: 59px; height: 24px; border: 1px solid #555; border-radius: 3px; overflow: hidden; }
.vseg i { flex: 1; display: flex; align-items: center; justify-content: center; }
.v1 { background: linear-gradient(#5a5a5a, #7c7c7c); border-right: 1px solid #555; } .v2 { background: linear-gradient(#fff, #ddd); }
.right { flex: 1; display: flex; flex-direction: column; border-left: 1px solid #aaa; }
.sheetbar { height: 17px; background: #98a5b6; border-bottom: 1px solid #8a8a8a; display: flex; flex: none; }
.nav { width: 65px; background: linear-gradient(#f4f4f4, #e4e4e4); display: flex; align-items: center; padding-left: 6px; }
.stabs { display: flex; margin-left: 14px; width: 884px; }
.stab { width: 51px; height: 15px; background: linear-gradient(#dadada, #ececec); border-right: 1px solid #666; border-bottom: 1px solid #666; border-left: 1px solid #888; border-radius: 0 0 11px 3px / 0 0 10px 3px; text-align: center; line-height: 15px; font-size: 11px; letter-spacing: .2px; color: #000; }
.cur { background: #fff; } .plus { width: 23px; display: flex; align-items: center; justify-content: center; }
.splitbar { width: 5px; background: #c8c8c8; border-right: 1px solid #888; }
.hscroll { width: 613px; background: #fafafa; padding: 5px 0 0 2px; } .hscroll i { display: block; width: 317px; height: 8px; border-radius: 4px; background: #c1c1c1; }
.hgrip { width: 12px; border: 1px solid #999; border-bottom: 0; border-top: 0; background: linear-gradient(#888 0 0) 3px 4px/1px 8px no-repeat, linear-gradient(#888 0 0) 6px 4px/1px 8px no-repeat, #fff; }
.hcorner { flex: 1; background: #fff; }
.status { height: 18px; display: flex; background: linear-gradient(#fafafa 0 1px, #f2f3f4 2px 45%, #e5e6e8 55% 90%, #fff 95%); border-bottom: 1px solid #777; line-height: 18px; font-size: 11px; letter-spacing: .25px; color: #000; }
.status span { border-right: 1px solid #aaa; padding-left: 4px; height: 17px; }
.p1 { width: 94px; } .p2 { width: 367px; } .p3 { width: 164px; } .p4 { width: 146px; display: flex; align-items: center; justify-content: space-between; padding-right: 5px; } .p5 { width: 35px; } .p6 { width: 34px; } .p7 { width: 28px; }
.status .p8 { flex: 1; border: 0; display: flex; justify-content: flex-end; align-items: flex-end; }
```

FILE: grid.js
```js
const heads = ['摂食','飲水','糞尿','静止','歩く(単独)','きる','後ろ蹴り','噛む','追いかける','逃げる','におい・フ','なめる・こ','鳴く、鳴き','追う・追尾','マウンティ','警戒','2頭以上で','なめる・極','こする（単','砂浴び'];
// Each row: A, B, C, G, W
const rows = [
  [2,15,1,0,1],[3,12,3,0,3],[3,13,3,2,3],[3,14,2,0,2],[3,15,2,0,2],
  [4,12,1,0,1],[4,13,2,0,2],[4,14,6,0,6],[4,15,11,1,11],[5,11,1,0,1],
  [5,13,4,1,5],[5,14,5,0,5],[5,15,10,0,10],[5,16,4,0,4],[5,17,4,1,4],
  [5,18,2,1,3],[5,19,4,0,4],[6,10,0,1,1],[6,13,6,0,6],[6,14,6,1,6]
];
const cell = (cls, html, bg) => `<div class="c ${cls}"${bg ? ` style="background:${bg}"` : ''}>${html}</div>`;
const button = '<i class="btn"><i class="arr"></i></i>';
const warm = v => {
  if (!v) return '';
  const t = Math.max(0, v - 2) / 9;
  const mix = (a, b) => Math.round(a + (b - a) * t);
  return `rgb(${mix(230, 226)},${mix(227, 208)},${mix(177, 173)})`;
};
const total = v => v === 1 ? '#52bdf2' : v === 2 ? '#9fd192' : v < 5 ? '#e5f07c' : '#e2c774';
const widthClass = i => i === 0 ? 'a' : i === 1 ? 'b' : i > 22 ? 'z' : '';

let out = '<div class="line heads"><div class="c n corner"><i></i></div>';
for (let i = 0; i < 25; i++) out += cell(widthClass(i), String.fromCharCode(65 + i));
out += cell('z', '') + '</div>';

out += '<div class="line first">' + cell('n', 1) + cell('a a1', `<span>z2AM</span>${button}`) + cell('b b1', button);
heads.forEach(h => { out += cell('h', `<span>${h}</span>${button}`); });
out += cell('', '') + cell('z', '') + cell('z', '') + cell('z', '') + '</div>';

rows.forEach(([a, b, c, g, w], r) => {
  const mark = w === 1 ? 'f' : 'f err';
  out += '<div class="line">' + cell('n', r + 2) + cell('a', a) + cell('b', b) + cell(mark, c, warm(c));
  for (let i = 3; i < 22; i++) out += i === 6 ? cell(mark, g, warm(g)) : cell(mark, 0);
  out += cell(mark, w, total(w)) + cell('z', a) + cell('z', b) + cell('z', '') + '</div>';
});
document.getElementById('sheet').innerHTML = out;
```
